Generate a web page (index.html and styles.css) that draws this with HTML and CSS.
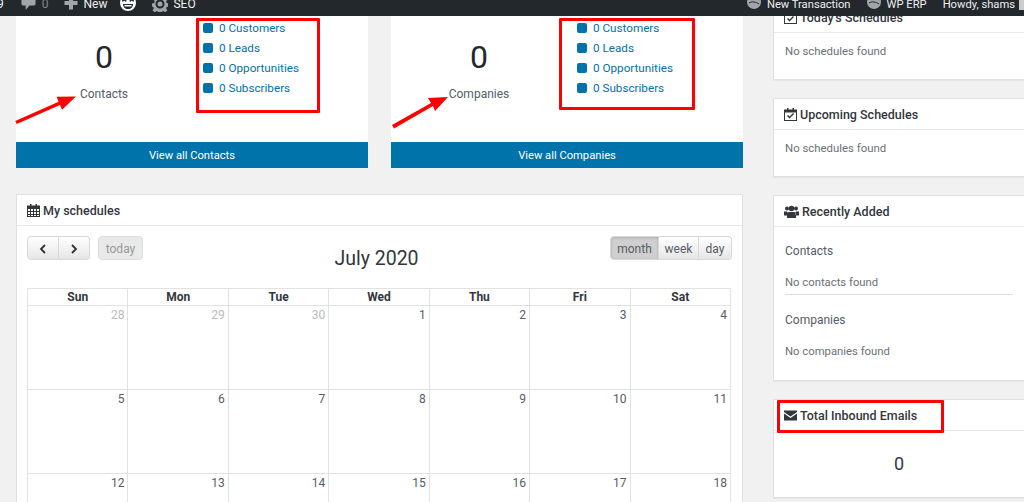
FILE: index.html
```html
<!DOCTYPE html>
<html lang="en">
<head>
    <meta charset="UTF-8">
    <title>CRM Dashboard</title>
    <link rel="stylesheet" href="styles.css">
</head>
<body>
    <div class="adminbar">
        <div class="bar-group">
            <span class="bar-count">9</span>
            <svg class="bar-icon comment" viewBox="0 0 16 16"><path d="M2 0h12a1.500 1.500 0 0 1 1.500 1.500v7A1.500 1.500 0 0 1 14 10H9l-4 5v-5H2A1.500 1.500 0 0 1 .5 8.500v-7A1.500 1.500 0 0 1 2 0z"/></svg>
            <span class="bar-zero">0</span>
            <svg class="bar-icon plus" viewBox="0 0 14 14"><path d="M5 1h4v4h4.500v4H9v4.500H5V9H.5V5H5z"/></svg>
            <span class="bar-new">New</span>
            <svg class="bar-icon face" viewBox="0 0 16 16"><circle cx="8" cy="8" r="8" fill="#fff"/><path d="M2.500 6.500c.5-2 3-2 3.500 0M10 6.500c.5-2 3-2 3.500 0" fill="none" stroke="#23282d" stroke-width="1.400"/><path d="M3 9h10c0 3-2 5-5 5s-5-2-5-5z" fill="#23282d"/><path d="M4.500 10h7v1.500h-7z" fill="#fff"/></svg>
            <svg class="bar-icon gear" viewBox="0 0 16 16"><path fill-rule="evenodd" d="M6.500 0h3l.4 2.200 1.500.6L13.300 1.500l2.100 2.100-1.300 1.900.6 1.500 2.300.5v3l-2.300.4-.6 1.500 1.300 1.900-2.100 2.100-1.900-1.300-1.500.6-.4 2.200h-3l-.4-2.200-1.500-.6-1.900 1.300L.5 14.300l1.300-1.900-.6-1.500L-.1 10.500v-3l2.300-.5.6-1.500L1.500 3.600l2.100-2.100 1.900 1.300 1-.6zM8 3.500a4.500 4.500 0 1 0 0 9 4.500 4.500 0 0 0 0-9z"/><circle cx="8" cy="8" r="2.500"/></svg>
            <span class="bar-seo">SEO</span>
        </div>
        <div class="bar-group bar-right">
            <svg class="bar-icon wp" viewBox="0 0 14 14"><circle cx="7" cy="7" r="7"/><path d="M3 4c3-2 7-1 9 1M2 8c3-2 7-1 10 1" stroke="#23282d" fill="none"/></svg>
            <span class="bar-trans">New Transaction</span>
            <svg class="bar-icon wp wp-erp" viewBox="0 0 14 14"><circle cx="7" cy="7" r="7"/><path d="M3 4c3-2 7-1 9 1M2 8c3-2 7-1 10 1" stroke="#23282d" fill="none"/></svg>
            <span class="bar-erp">WP ERP</span>
            <span class="bar-howdy">Howdy, shams</span>
            <span class="bar-avatar"></span>
        </div>
    </div>

    <div class="page">
        <div class="left-col">
            <div class="stat-row">
                <div class="stat-card">
                    <div class="stat-body">
                        <div class="stat-total">
                            <div class="stat-num">0</div>
                            <div class="stat-name">Contacts</div>
                        </div>
                        <ul class="stat-list">
                            <li><i></i><a href="#">0 Customers</a></li>
                            <li><i></i><a href="#">0 Leads</a></li>
                            <li><i></i><a href="#">0 Opportunities</a></li>
                            <li><i></i><a href="#">0 Subscribers</a></li>
                        </ul>
                    </div>
                    <a href="#" class="stat-footer">View all Contacts</a>
                </div>
                <div class="stat-card">
                    <div class="stat-body">
                        <div class="stat-total">
                            <div class="stat-num">0</div>
                            <div class="stat-name">Companies</div>
                        </div>
                        <ul class="stat-list">
                            <li><i></i><a href="#">0 Customers</a></li>
                            <li><i></i><a href="#">0 Leads</a></li>
                            <li><i></i><a href="#">0 Opportunities</a></li>
                            <li><i></i><a href="#">0 Subscribers</a></li>
                        </ul>
                    </div>
                    <a href="#" class="stat-footer">View all Companies</a>
                </div>
            </div>

            <div class="box calendar-box">
                <h3 class="box-title">
                    <svg class="title-icon" viewBox="0 0 13 13"><path fill-rule="evenodd" d="M3 0h1.500v1.500h4V0H10v1.500h3V13H0V1.500h3zM1 5v2h2V5zm3 0v2h2V5zm3 0v2h2V5zm3 0v2h2V5zM1 8v2h2V8zm3 0v2h2V8zm3 0v2h2V8zm3 0v2h2V8zM1 11v1h2v-1zm3 0v1h2v-1zm3 0v1h2v-1zm3 0v1h2v-1z"/></svg>
                    My schedules
                </h3>
                <div class="calendar">
                    <div class="cal-toolbar">
                        <div class="cal-nav">
                            <div class="btn-group">
                                <button class="cal-btn arrow"><svg viewBox="0 0 8 10"><path d="M6 1L2 5l4 4" fill="none" stroke="#333" stroke-width="1.800"/></svg></button>
                                <button class="cal-btn arrow"><svg viewBox="0 0 8 10"><path d="M2 1l4 4-4 4" fill="none" stroke="#333" stroke-width="1.800"/></svg></button>
                            </div>
                            <button class="cal-btn today">today</button>
                        </div>
                        <h2 class="cal-title">July 2020</h2>
                        <div class="btn-group">
                            <button class="cal-btn active month">month</button>
                            <button class="cal-btn week">week</button>
                            <button class="cal-btn day">day</button>
                        </div>
                    </div>
                    <table class="cal-table">
                        <thead>
                            <tr><th>Sun</th><th>Mon</th><th>Tue</th><th>Wed</th><th>Thu</th><th>Fri</th><th>Sat</th></tr>
                        </thead>
                        <tbody>
                            <tr><td class="other">28</td><td class="other">29</td><td class="other">30</td><td>1</td><td>2</td><td>3</td><td>4</td></tr>
                            <tr><td>5</td><td>6</td><td>7</td><td>8</td><td>9</td><td>10</td><td>11</td></tr>
                            <tr><td>12</td><td>13</td><td>14</td><td>15</td><td>16</td><td>17</td><td>18</td></tr>
                        </tbody>
                    </table>
                </div>
            </div>
        </div>

        <div class="right-col">
            <div class="box side-box">
                <h3 class="box-title">
                    <svg class="title-icon" viewBox="0 0 13 13"><path fill-rule="evenodd" d="M3 0h1.500v1.500h4V0H10v1.500h3V13H0V1.500h3zM1 4.500V12h11V4.500zM3 8l1-1 1.500 1.500L9 5l1 1-4.500 4.500z"/></svg>
                    Today's Schedules
                </h3>
                <p class="side-body">No schedules found</p>
            </div>
            <div class="box side-box">
                <h3 class="box-title">
                    <svg class="title-icon" viewBox="0 0 13 13"><path fill-rule="evenodd" d="M3 0h1.500v1.500h4V0H10v1.500h3V13H0V1.500h3zM1 4.500V12h11V4.500zM3 8l1-1 1.500 1.500L9 5l1 1-4.500 4.500z"/></svg>
                    Upcoming Schedules
                </h3>
                <p class="side-body">No schedules found</p>
            </div>
            <div class="box side-box">
                <h3 class="box-title">
                    <svg class="title-icon users" viewBox="0 0 15 13"><circle cx="3" cy="3.500" r="2"/><circle cx="12" cy="3.500" r="2"/><circle cx="7.500" cy="3.500" r="2.800"/><path d="M0 6.500h3l1 1.500-1 2.500H0zM15 6.500h-3l-1 1.500 1 2.500h3zM4.500 7h6L12 9v4H3V9z"/></svg>
                    Recently Added
                </h3>
                <div class="recent">
                    <h4 class="recent-head">Contacts</h4>
                    <p class="recent-empty">No contacts found</p>
                    <hr class="recent-line">
                    <h4 class="recent-head">Companies</h4>
                    <p class="recent-empty">No companies found</p>
                </div>
            </div>
            <div class="box side-box">
                <h3 class="box-title">
                    <svg class="title-icon mail" viewBox="0 0 13 10"><path d="M0 0h13v1.500L6.500 6 0 1.500zM0 3l6.500 4.500L13 3v7H0z"/></svg>
                    Total Inbound Emails
                </h3>
                <div class="inbound">0</div>
            </div>
        </div>
    </div>

    <!-- annotations drawn on top of the screenshot -->
    <div class="mark mark-contacts"></div>
    <div class="mark mark-companies"></div>
    <div class="mark mark-inbound"></div>
    <svg class="arrows" viewBox="0 0 1024 502">
        <path d="M15.300 120.900L58.600 101.700l-2-4.900L76 96.500 62 109.800l-2-4.900L16.700 124.100z"/>
        <path d="M392 125L431 103l-3-5 20-1-13 14-2-5L394 128.500z"/>
    </svg>
</body>
</html>
```

FILE: styles.css
```css
* {
    margin: 0;
    padding: 0;
    box-sizing: border-box;
}

html, body {
    height: 502px;
    overflow: hidden;
}

body {
    background: #f1f1f1;
    font-family: Roboto, Arial, sans-serif;
    font-size: 12px;
    color: #555d66;
}

a {
    color: #0073aa;
    text-decoration: none;
}

/* admin bar */
.adminbar {
    position: relative;
    z-index: 2;
    height: 16px;
    background: #23282d;
    color: #eee;
    display: flex;
    justify-content: space-between;
    align-items: flex-start;
    overflow: hidden;
    font-size: 12px;
}

.bar-group {
    display: flex;
    align-items: center;
    height: 12px;
    margin-top: -2px;
}

.bar-right {
    font-size: 11.200px;
}

.bar-count {
    margin-left: -3px;
}

.bar-icon {
    fill: #a0a5aa;
    flex: none;
}

.comment {
    width: 15px;
    height: 15px;
    margin: 0 0 2px 17px;
}

.bar-zero {
    margin-left: 6px;
    color: #82878c;
}

.plus {
    width: 14px;
    height: 14px;
    margin: 0 0 2px 15px;
}

.bar-new {
    margin-left: 6px;
}

.face {
    width: 16px;
    height: 16px;
    margin: 0 0 3px 13px;
}

.gear {
    width: 16px;
    height: 16px;
    margin-left: 16px;
}

.bar-seo {
    margin-left: 5px;
}

.wp {
    width: 14px;
    height: 14px;
    margin-bottom: 4px;
}

.bar-trans {
    margin-left: 6px;
}

.wp-erp {
    margin-left: 16px;
}

.bar-erp {
    margin-left: 6px;
}

.bar-howdy {
    margin-left: 16px;
}

.bar-avatar {
    width: 5px;
    height: 12px;
    margin-left: 4px;
    background: #ccc;
}

/* page columns */
.page {
    display: flex;
    gap: 30px;
    padding-left: 16px;
}

.left-col {
    width: 727px;
    flex: none;
}

.right-col {
    width: 252px;
    flex: none;
    margin-top: -15px;
}

.box {
    background: #fff;
    border: 1px solid #e0e0e0;
    box-shadow: 0 1px 1px rgba(0, 0, 0, 0.04);
}

.box-title {
    height: 31px;
    padding: 0 10px;
    border-bottom: 1px solid #e8e8e8;
    display: flex;
    align-items: center;
    gap: 3px;
    font-size: 12.500px;
    font-weight: 500;
    color: #32373c;
}

.title-icon {
    width: 13px;
    height: 13px;
    fill: #32373c;
    flex: none;
}

.title-icon.users {
    width: 15px;
}

/* stat cards */
.stat-row {
    display: flex;
    justify-content: space-between;
}

.stat-card {
    width: 352px;
    height: 152px;
    background: #fff;
    display: flex;
    flex-direction: column;
}

.stat-body {
    flex: 1;
    display: flex;
}

.stat-total {
    width: 50%;
    text-align: center;
    padding-top: 21px;
}

.stat-num {
    font-size: 32px;
    line-height: 40px;
    color: #23282d;
}

.stat-name {
    margin-top: 7px;
    line-height: 20px;
    color: #555d66;
}

.stat-list {
    list-style: none;
    padding: 2px 0 0 11px;
    font-size: 11.700px;
}

.stat-card + .stat-card .stat-list {
    padding-left: 10px;
}

.stat-list li {
    height: 20px;
    display: flex;
    align-items: center;
    gap: 6px;
}

.stat-list i {
    width: 10px;
    height: 10px;
    background: #0073aa;
    border-radius: 2px;
}

.stat-footer {
    height: 26px;
    line-height: 27px;
    font-size: 11.200px;
    background: #0073aa;
    color: #fff;
    text-align: center;
}

/* calendar */
.calendar-box {
    margin-top: 26px;
}

.calendar {
    padding: 10px 10px 0;
}

.cal-toolbar {
    display: flex;
    justify-content: space-between;
    height: 52px;
}

.cal-nav {
    display: flex;
    gap: 8px;
    align-self: flex-start;
}

.btn-group {
    display: flex;
    align-self: flex-start;
}

.cal-btn {
    height: 24px;
    padding-top: 1px;
    font-family: inherit;
    font-size: 12px;
    color: #555d66;
    border: 1px solid #d8d8d8;
    border-left-width: 0;
    background: linear-gradient(#fff, #e6e6e6);
}

.cal-btn:first-child {
    border-left-width: 1px;
    border-radius: 4px 0 0 4px;
}

.cal-btn:last-child {
    border-radius: 0 4px 4px 0;
}

.arrow {
    width: 31.500px;
    display: flex;
    align-items: center;
    justify-content: center;
}

.arrow svg {
    width: 8px;
    height: 10px;
}

.cal-btn.today {
    width: 45px;
    border: 1px solid #ddd;
    border-radius: 4px;
    background: #e9e9e9;
    color: #999;
}

.cal-btn.active {
    background: #cfcfcf;
    box-shadow: inset 0 1px 3px rgba(0, 0, 0, 0.15);
}

.month {
    width: 49px;
}

.week {
    width: 40px;
}

.day {
    width: 33px;
}

.cal-title {
    font-size: 19.500px;
    font-weight: 400;
    color: #32373c;
    margin-top: 9px;
    line-height: 28px;
}

.cal-table {
    width: 704px;
    table-layout: fixed;
    border-collapse: collapse;
}

.cal-table th,
.cal-table td {
    border: 1px solid #e2e2e2;
}

.cal-table th {
    height: 17px;
    font-size: 12px;
    font-weight: 700;
    line-height: 15px;
    color: #32373c;
}

.cal-table td {
    height: 84px;
    padding: 2px 3px;
    vertical-align: top;
    text-align: right;
    font-size: 12px;
}

.cal-table td.other {
    color: #bbb;
}

/* sidebar */
.side-box {
    margin-bottom: 18px;
}

.side-body {
    height: 46px;
    padding: 9px 11px 0;
    font-size: 11.400px;
    line-height: 18px;
    color: #6a7178;
}

.recent {
    height: 153px;
    padding: 15px 11px 0;
}

.recent-head {
    font-size: 12px;
    font-weight: 400;
    line-height: 18px;
}

.recent-empty {
    margin-top: 14px;
    font-size: 11.300px;
    line-height: 18px;
    color: #6a7178;
}

.recent-line {
    border: 0;
    border-top: 1px solid #ddd;
    margin: 2px 0 16px;
}

.inbound {
    height: 66px;
    padding-top: 20px;
    text-align: center;
    font-size: 18px;
    line-height: 26px;
    color: #32373c;
}

/* red annotations */
.mark {
    position: absolute;
    z-index: 3;
    border: 3px solid #f00;
    border-radius: 1px;
}

.mark-contacts {
    left: 196px;
    top: 18px;
    width: 124px;
    height: 95px;
}

.mark-companies {
    left: 559px;
    top: 18px;
    width: 136px;
    height: 92px;
}

.mark-inbound {
    left: 777px;
    top: 400px;
    width: 167px;
    height: 33px;
}

.arrows {
    position: absolute;
    z-index: 3;
    left: 0;
    top: 0;
    width: 1024px;
    height: 502px;
    fill: #f00;
}
```
